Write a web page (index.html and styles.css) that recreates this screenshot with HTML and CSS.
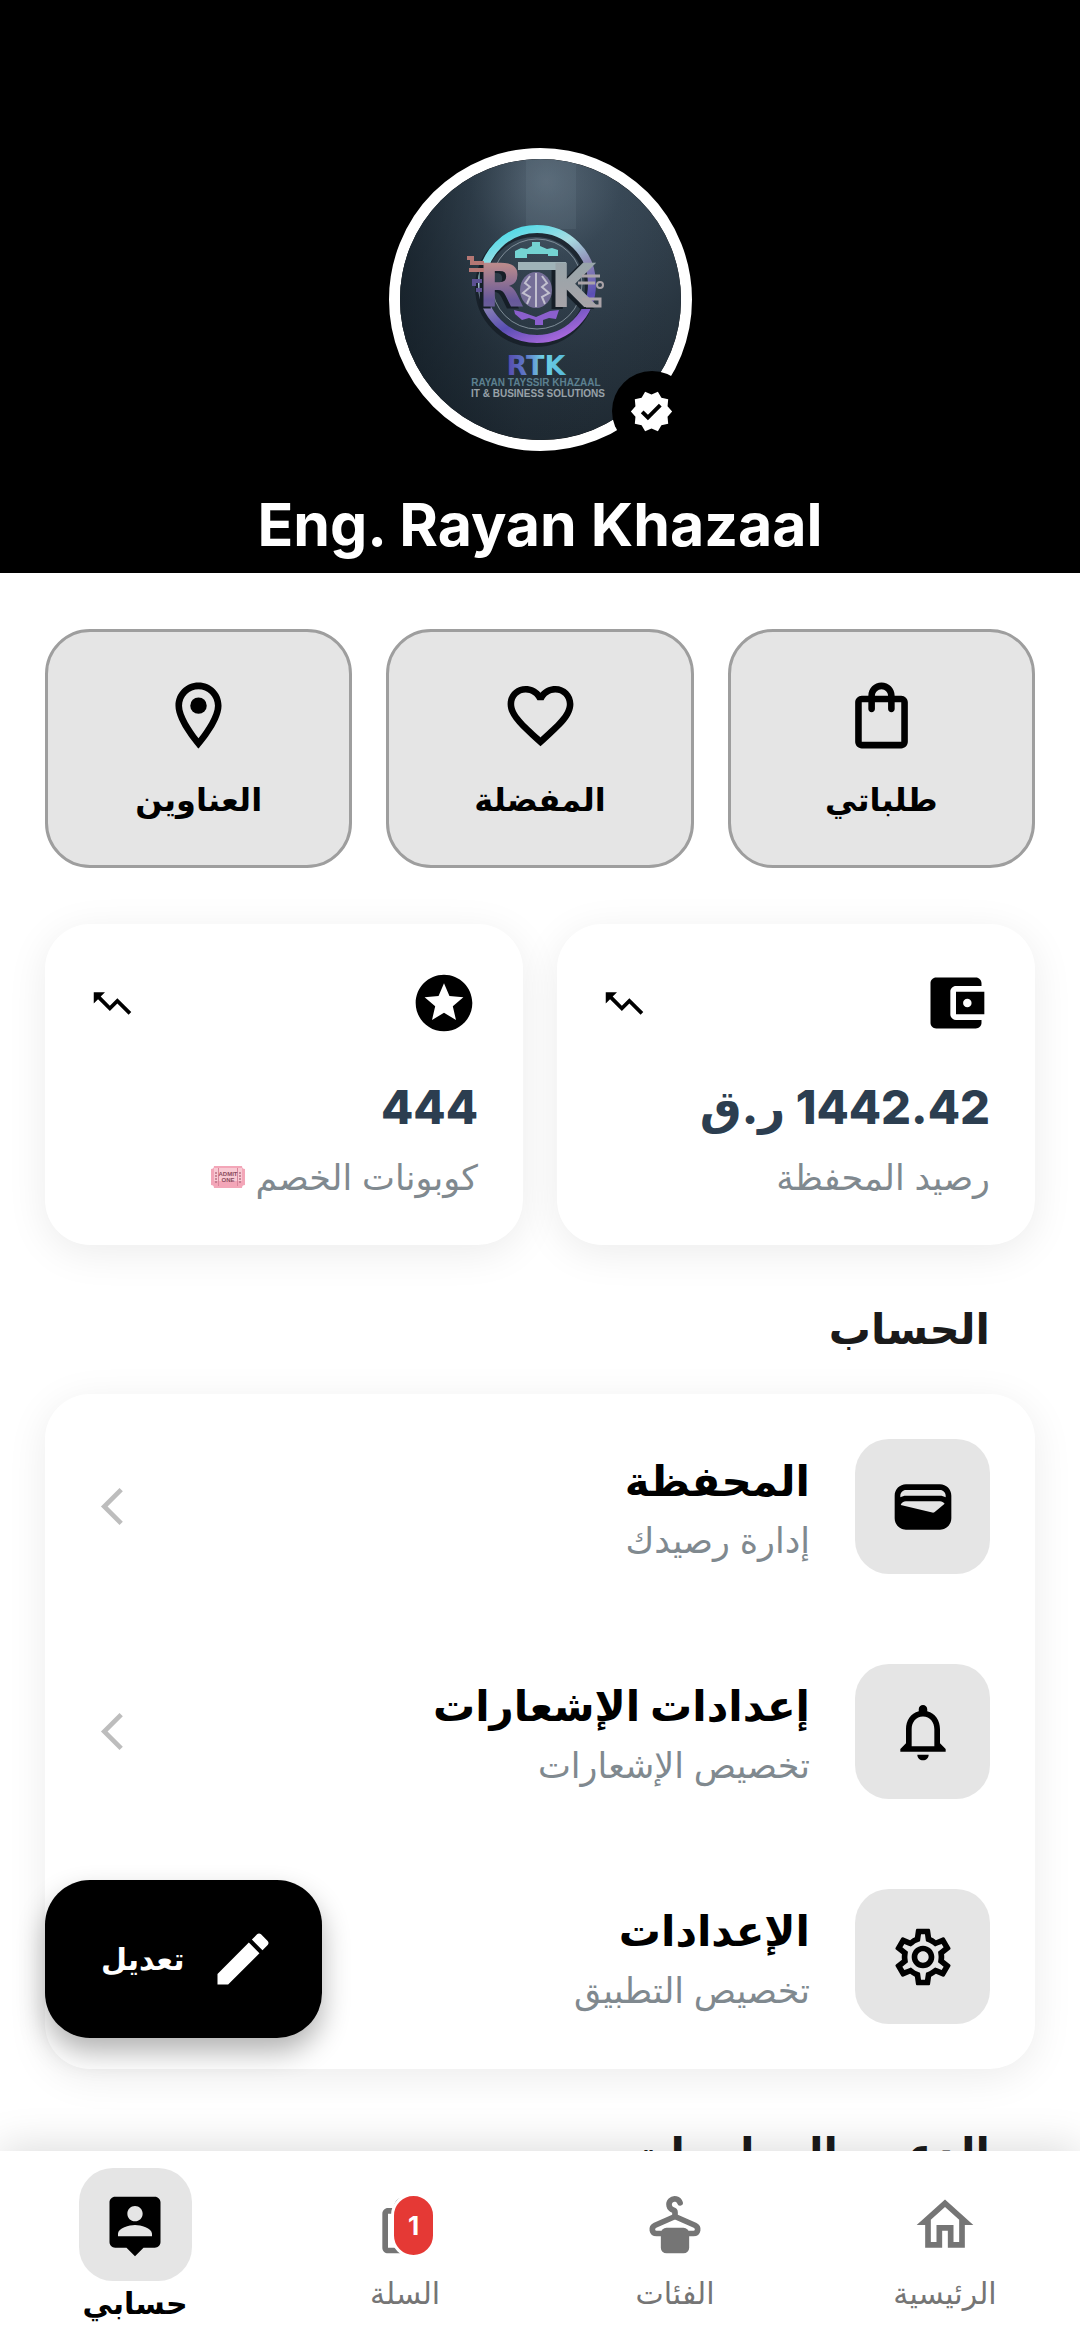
FILE: index.html
```html
<!DOCTYPE html>
<html lang="ar" dir="rtl">

<head>
    <meta charset="UTF-8">
    <meta name="viewport" content="width=device-width, initial-scale=1.0">
    <title>حسابي</title>
    <link rel="stylesheet" href="styles.css">
</head>

<body>

    <main class="content">

        <header class="profile">
            <div class="avatar">
                <svg class="avatar-img" viewBox="0 0 281 281" role="img" aria-label="RTK">
                    <defs>
                        <radialGradient id="wall" cx="0.52" cy="0.08" r="0.9">
                            <stop offset="0" stop-color="#5c6d7c" />
                            <stop offset="0.3" stop-color="#3a4a58" />
                            <stop offset="0.7" stop-color="#293641" />
                            <stop offset="1" stop-color="#202b34" />
                        </radialGradient>
                        <linearGradient id="shade" x1="0" x2="1" y1="0" y2="0">
                            <stop offset="0" stop-color="#0e1820" stop-opacity="0.6" />
                            <stop offset="0.44" stop-color="#0e1820" stop-opacity="0.1" />
                            <stop offset="1" stop-color="#0e1820" stop-opacity="0" />
                        </linearGradient>
                        <linearGradient id="ring" x1="0.3" x2="0.7" y1="0" y2="1">
                            <stop offset="0" stop-color="#55dbe8" />
                            <stop offset="0.25" stop-color="#a9dce2" />
                            <stop offset="0.5" stop-color="#8d86b4" />
                            <stop offset="0.75" stop-color="#5a4fb4" />
                            <stop offset="1" stop-color="#a868dc" />
                        </linearGradient>
                        <linearGradient id="copper" x1="0" x2="0" y1="0" y2="1">
                            <stop offset="0.2" stop-color="#b98a8c" />
                            <stop offset="0.7" stop-color="#66589a" />
                            <stop offset="1" stop-color="#6f6a94" />
                        </linearGradient>
                        <linearGradient id="steel" x1="0" x2="0" y1="0" y2="1">
                            <stop offset="0" stop-color="#94a5aa" />
                            <stop offset="1" stop-color="#aba3a8" />
                        </linearGradient>
                        <linearGradient id="word" x1="0" x2="1" y1="0" y2="0">
                            <stop offset="0" stop-color="#5647ac" />
                            <stop offset="0.35" stop-color="#5f7fcb" />
                            <stop offset="0.6" stop-color="#6fd0e6" />
                            <stop offset="1" stop-color="#55b9d8" />
                        </linearGradient>
                    </defs>
                    <rect width="281" height="281" fill="url(#wall)" />
                    <rect width="281" height="281" fill="url(#shade)" />
                    <path d="M126 0h50v70h-50z" fill="#8194a3" opacity="0.14" />
                    <circle cx="135" cy="128" r="55" fill="none" stroke="#121a22" stroke-width="10" opacity="0.7" />
                    <circle cx="137" cy="125" r="55" fill="none" stroke="url(#ring)" stroke-width="8" />
                    <circle cx="137" cy="125" r="45" fill="none" stroke="#7f8d98" stroke-width="1" />
                    <path d="M115 99v-7l6-3 6 1 3-2 2-1v-4h8v4l7 3 5-1 6 2v6h-10v-2h-21v4z" fill="#74d3d2" />
                    <path d="M114 151l8 2 14 5 14-6 9-1-3 9-7-1-6 2v5h-8v-5l-6-2-7 2-7-6z" fill="#8b5fcd" />
                    <g class="logo-big" fill="#151e27" transform="translate(-4 2)">
                        <text x="78" y="148">R</text>
                        <text x="150" y="148">K</text>
                    </g>
                    <path d="M118 103h48v8h-48z" fill="#9fb3b8" />
                    <g class="logo-big">
                        <text x="78" y="148" fill="url(#copper)">R</text>
                        <text x="150" y="148" fill="url(#steel)">K</text>
                    </g>
                    <ellipse cx="136" cy="131" rx="16" ry="18" fill="#756e98" />
                    <path d="M136 114v34M130 117l-5 7 5 4-7 6 7 4-3 7M142 117l5 7-5 4 7 6-7 4 3 7" fill="none" stroke="#c2c0cf" stroke-width="2" />
                    <path d="M84 104H72v-5h-5M84 111H69" fill="none" stroke="#b57774" stroke-width="4" />
                    <path d="M82 122h-8v5M82 131h-6" fill="none" stroke="#5b5092" stroke-width="4" />
                    <path d="M182 117h18M178 124h17M182 140h18v7h-14" fill="none" stroke="#aaa3a8" stroke-width="3" />
                    <circle cx="200" cy="126" r="3" fill="none" stroke="#aaa3a8" stroke-width="2" />
                    <text class="logo-mid" x="136" y="216" fill="url(#word)">RTK</text>
                    <text class="logo-line" x="136" y="227" fill="#5c8090">RAYAN TAYSSIR KHAZAAL</text>
                    <text class="logo-line" x="138" y="238" fill="#98a1a8">IT &amp; BUSINESS SOLUTIONS</text>
                </svg>
                <span class="verified">
                    <svg viewBox="0 0 24 24">
                        <path d="M23 12l-2.44-2.79.34-3.69-3.61-.82-1.89-3.2L12 2.96 8.6 1.5 6.71 4.69 3.1 5.5l.34 3.7L1 12l2.44 2.79-.34 3.7 3.61.82L8.6 22.5l3.4-1.47 3.4 1.46 1.89-3.19 3.61-.82-.34-3.69L23 12zm-12.91 4.72l-3.8-3.81 1.48-1.48 2.32 2.33 5.85-5.87 1.48 1.48-7.33 7.35z" />
                    </svg>
                </span>
            </div>
            <h1 class="name" dir="ltr">Eng. Rayan Khazaal</h1>
        </header>

        <!-- Quick links -->
        <nav class="quick">
            <a class="quick-card" href="#orders">
                <svg viewBox="0 0 24 24">
                    <path d="M18 6h-2c0-2.21-1.79-4-4-4S8 3.79 8 6H6c-1.1 0-2 .9-2 2v12c0 1.1.9 2 2 2h12c1.1 0 2-.9 2-2V8c0-1.1-.9-2-2-2zm-6-2c1.1 0 2 .9 2 2h-4c0-1.1.9-2 2-2zm6 16H6V8h2v2c0 .55.45 1 1 1s1-.45 1-1V8h4v2c0 .55.45 1 1 1s1-.45 1-1V8h2v12z" />
                </svg>
                <span>طلباتي</span>
            </a>
            <a class="quick-card" href="#favorites">
                <svg viewBox="0 0 24 24">
                    <path d="M16.5 3c-1.74 0-3.41.81-4.5 2.09C10.91 3.81 9.24 3 7.5 3 4.42 3 2 5.42 2 8.5c0 3.78 3.4 6.86 8.55 11.54L12 21.35l1.45-1.32C18.6 15.36 22 12.28 22 8.5 22 5.42 19.58 3 16.5 3zm-4.4 15.55l-.1.1-.1-.1C7.14 14.24 4 11.39 4 8.5 4 6.5 5.5 5 7.5 5c1.54 0 3.04.99 3.57 2.36h1.87C13.46 5.99 14.96 5 16.5 5c2 0 3.5 1.5 3.5 3.5 0 2.89-3.14 5.74-7.9 10.05z" />
                </svg>
                <span>المفضلة</span>
            </a>
            <a class="quick-card" href="#addresses">
                <svg viewBox="0 0 24 24">
                    <path d="M12 2C8.13 2 5 5.13 5 9c0 5.25 7 13 7 13s7-7.75 7-13c0-3.87-3.13-7-7-7zM7 9c0-2.76 2.24-5 5-5s5 2.24 5 5c0 2.88-2.88 7.19-5 9.88C9.92 16.21 7 11.85 7 9z" />
                    <circle cx="12" cy="9" r="2.5" />
                </svg>
                <span>العناوين</span>
            </a>
        </nav>

        <!-- Balance and coupons -->
        <section class="stats">
            <div class="stat-card">
                <div class="stat-icons">
                    <svg class="icon" viewBox="0 0 24 24">
                        <path d="M21 18v1c0 1.1-.9 2-2 2H5c-1.11 0-2-.9-2-2V5c0-1.1.89-2 2-2h14c1.1 0 2 .9 2 2v1h-9c-1.11 0-2 .9-2 2v8c0 1.1.89 2 2 2h9zm-9-2h10V8H12v8zm4-2.5c-.83 0-1.5-.67-1.5-1.5s.67-1.5 1.5-1.5 1.5.67 1.5 1.5-.67 1.5-1.5 1.5z" />
                    </svg>
                    <svg class="icon-small flip" viewBox="0 0 24 24">
                        <path d="M16 6l2.29 2.29-4.88 4.88-4-4L2 16.59 3.41 18l6-6 4 4 6.3-6.29L22 12V6z" />
                    </svg>
                </div>
                <div class="stat-value"><bdi>1442.42</bdi> ر.ق</div>
                <div class="stat-label">رصيد المحفظة</div>
            </div>
            <div class="stat-card">
                <div class="stat-icons">
                    <svg class="icon" viewBox="0 0 24 24">
                        <path d="M11.99 2C6.47 2 2 6.48 2 12s4.47 10 9.99 10C17.52 22 22 17.52 22 12S17.52 2 11.99 2zm4.24 16L12 15.45 7.77 18l1.12-4.81-3.73-3.23 4.92-.42L12 5l1.92 4.53 4.92.42-3.73 3.23L16.23 18z" />
                    </svg>
                    <svg class="icon-small flip" viewBox="0 0 24 24">
                        <path d="M16 6l2.29 2.29-4.88 4.88-4-4L2 16.59 3.41 18l6-6 4 4 6.3-6.29L22 12V6z" />
                    </svg>
                </div>
                <div class="stat-value">444</div>
                <div class="stat-label">
                    كوبونات الخصم
                    <svg class="ticket" viewBox="0 0 34 22">
                        <path d="M3 0h28a3 3 0 0 0 3 3v16a3 3 0 0 0-3 3H3a3 3 0 0 0-3-3V3a3 3 0 0 0 3-3z" fill="#f3a6b8" />
                        <path d="M3 2h28v13H3z" fill="#f8c9d3" />
                        <path d="M7.5 2v18M26.5 2v18" stroke="#d9879b" stroke-width="1" />
                        <path d="M5 6v11M29 6v11" stroke="#b97386" stroke-width="1.5" stroke-dasharray="2 1" />
                        <text x="17" y="10">ADMIT</text>
                        <text x="17" y="16">ONE</text>
                    </svg>
                </div>
            </div>
        </section>

        <h2 class="section-title">الحساب</h2>
        <section class="panel">
            <a class="row" href="#wallet">
                <span class="tile">
                    <svg class="icon" viewBox="0 0 24 24">
                        <path d="M18 4H6C3.79 4 2 5.79 2 8v8c0 2.21 1.79 4 4 4h12c2.21 0 4-1.79 4-4V8c0-2.21-1.79-4-4-4zm-1.86 9.77c-.24.2-.57.28-.88.2L4.15 11.25C4.45 10.52 5.16 10 6 10h12c.67 0 1.26.34 1.63.84l-3.49 2.93zM6 6h12c1.1 0 2 .9 2 2v.55c-.59-.34-1.27-.55-2-.55H6c-.73 0-1.41.21-2 .55V8c0-1.1.9-2 2-2z" />
                    </svg>
                </span>
                <span class="row-text">
                    <strong>المحفظة</strong>
                    <small>إدارة رصيدك</small>
                </span>
                <svg class="icon-small chevron flip" viewBox="0 0 24 24">
                    <path d="M6.49 20.13l1.77 1.77 9.9-9.9-9.9-9.9-1.77 1.77L14.62 12z" />
                </svg>
            </a>
            <a class="row" href="#notifications">
                <span class="tile">
                    <svg class="icon" viewBox="0 0 24 24">
                        <path d="M12 22c1.1 0 2-.9 2-2h-4c0 1.1.9 2 2 2zm6-6v-5c0-3.07-1.63-5.64-4.5-6.32V4c0-.83-.67-1.5-1.5-1.5s-1.5.67-1.5 1.5v.68C7.64 5.36 6 7.92 6 11v5l-2 2v1h16v-1l-2-2zm-2 1H8v-6c0-2.48 1.51-4.5 4-4.5s4 2.02 4 4.5v6z" />
                    </svg>
                </span>
                <span class="row-text">
                    <strong>إعدادات الإشعارات</strong>
                    <small>تخصيص الإشعارات</small>
                </span>
                <svg class="icon-small chevron flip" viewBox="0 0 24 24">
                    <path d="M6.49 20.13l1.77 1.77 9.9-9.9-9.9-9.9-1.77 1.77L14.62 12z" />
                </svg>
            </a>
            <a class="row" href="#settings">
                <span class="tile">
                    <svg class="icon" viewBox="0 0 24 24">
                        <path d="M19.43 12.98c.04-.32.07-.64.07-.98s-.03-.66-.07-.98l2.11-1.65c.19-.15.24-.42.12-.64l-2-3.46c-.09-.16-.26-.25-.44-.25-.06 0-.12.01-.17.03l-2.49 1c-.52-.4-1.08-.73-1.69-.98l-.38-2.65C14.46 2.18 14.25 2 14 2h-4c-.25 0-.46.18-.49.42l-.38 2.65c-.61.25-1.17.59-1.69.98l-2.49-1c-.06-.02-.12-.03-.18-.03-.17 0-.34.09-.43.25l-2 3.46c-.13.22-.07.49.12.64l2.11 1.65c-.04.32-.07.65-.07.98s.03.66.07.98l-2.11 1.65c-.19.15-.24.42-.12.64l2 3.46c.09.16.26.25.44.25.06 0 .12-.01.17-.03l2.49-1c.52.4 1.08.73 1.69.98l.38 2.65c.03.24.24.42.49.42h4c.25 0 .46-.18.49-.42l.38-2.65c.61-.25 1.17-.59 1.69-.98l2.49 1c.06.02.12.03.18.03.17 0 .34-.09.43-.25l2-3.46c.12-.22.07-.49-.12-.64l-2.11-1.65zm-1.98-1.71c.04.31.05.52.05.73s-.02.43-.05.73l-.14 1.13.89.7 1.08.84-.7 1.21-1.27-.51-1.04-.42-.9.68c-.43.32-.84.56-1.25.73l-1.06.43-.16 1.13-.2 1.35h-1.4l-.19-1.35-.16-1.13-1.06-.43c-.43-.18-.83-.41-1.23-.71l-.91-.7-1.06.43-1.27.51-.7-1.21 1.08-.84.89-.7-.14-1.13c-.03-.31-.05-.54-.05-.74s.02-.43.05-.73l.14-1.13-.89-.7-1.08-.84.7-1.21 1.27.51 1.04.42.9-.68c.43-.32.84-.56 1.25-.73l1.06-.43.16-1.13.2-1.35h1.39l.19 1.35.16 1.13 1.06.43c.43.18.83.41 1.23.71l.91.7 1.06-.43 1.27-.51.7 1.21-1.07.85-.89.7.14 1.13zM12 8c-2.21 0-4 1.79-4 4s1.79 4 4 4 4-1.79 4-4-1.79-4-4-4zm0 6c-1.1 0-2-.9-2-2s.9-2 2-2 2 .9 2 2-.9 2-2 2z" />
                    </svg>
                </span>
                <span class="row-text">
                    <strong>الإعدادات</strong>
                    <small>تخصيص التطبيق</small>
                </span>
                <svg class="icon-small chevron flip" viewBox="0 0 24 24">
                    <path d="M6.49 20.13l1.77 1.77 9.9-9.9-9.9-9.9-1.77 1.77L14.62 12z" />
                </svg>
            </a>
        </section>

        <h2 class="section-title">الدعم والمعلومات</h2>
    </main>

    <button class="fab" type="button">
        <svg class="icon" viewBox="0 0 24 24">
            <path d="M3 17.25V21h3.75L17.81 9.94l-3.75-3.75L3 17.25zM20.71 7.04c.39-.39.39-1.02 0-1.41l-2.34-2.34c-.39-.39-1.02-.39-1.41 0l-1.83 1.83 3.75 3.75 1.83-1.83z" />
        </svg>
        <span>تعديل</span>
    </button>

    <nav class="tabbar">
        <a class="tab" href="#home">
            <svg class="icon" viewBox="0 0 24 24">
                <path d="M12 5.69l5 4.5V18h-2v-6H9v6H7v-7.81l5-4.5M12 3L2 12h3v8h6v-6h2v6h6v-8h3L12 3z" />
            </svg>
            <span>الرئيسية</span>
        </a>
        <a class="tab" href="#categories">
            <svg class="icon" viewBox="0 0 24 24">
                <path d="M13.8 4.2A2 2 0 1 0 11.3 6.7Q12 6.9 12 7.5V9M12 9L5 12.1C3.4 12.9 3.8 15 5.5 15h13c1.7 0 2.1-2.1.5-2.9L12 9z" fill="none" stroke="currentColor" stroke-width="2" stroke-linecap="round" />
                <rect x="7" y="13" width="10" height="9" rx="2" />
            </svg>
            <span>الفئات</span>
        </a>
        <a class="tab" href="#cart">
            <span class="cart">
                <svg class="icon" viewBox="0 0 24 24">
                    <path d="M18 6h-2c0-2.21-1.79-4-4-4S8 3.79 8 6H6c-1.1 0-2 .9-2 2v12c0 1.1.9 2 2 2h12c1.1 0 2-.9 2-2V8c0-1.1-.9-2-2-2zm-6-2c1.1 0 2 .9 2 2h-4c0-1.1.9-2 2-2zm6 16H6V8h12v12z" />
                </svg>
                <span class="badge">1</span>
            </span>
            <span>السلة</span>
        </a>
        <a class="tab active" href="#account">
            <span class="tab-tile">
                <svg class="icon" viewBox="0 0 24 24">
                    <path d="M19 2H5c-1.11 0-2 .9-2 2v14c0 1.1.89 2 2 2h4l3 3 3-3h4c1.1 0 2-.9 2-2V4c0-1.1-.9-2-2-2zm-7 3.3c1.49 0 2.7 1.21 2.7 2.7 0 1.49-1.21 2.7-2.7 2.7-1.49 0-2.7-1.21-2.7-2.7 0-1.49 1.21-2.7 2.7-2.7zM18 16H6v-.9c0-2 4-3.1 6-3.1s6 1.1 6 3.1v.9z" />
                </svg>
            </span>
            <span>حسابي</span>
        </a>
    </nav>

</body>

</html>
```
FILE: styles.css
```css
* {
    box-sizing: border-box;
}

body {
    margin: 0;
    height: 100vh;
    display: flex;
    flex-direction: column;
    position: relative;
    overflow: hidden;
    background-color: #fff;
    color: #000;
    font-family: Inter, "DejaVu Sans", sans-serif;
}

a {
    color: inherit;
    text-decoration: none;
}

svg {
    display: block;
    fill: currentColor;
}

.icon {
    width: 68px;
    height: 68px;
    flex: none;
}

.icon-small {
    width: 45px;
    height: 45px;
    flex: none;
}

.flip {
    transform: scaleX(-1);
}

.content {
    flex: 1;
    min-height: 0;
    overflow-y: auto;
    scrollbar-width: none;
}

/* Header */

.profile {
    display: flex;
    flex-direction: column;
    align-items: center;
    padding: 148px 45px 12px;
    background-color: #000;
    color: #fff;
}

.avatar {
    position: relative;
    width: 303px;
    height: 303px;
    border: 11px solid #fff;
    border-radius: 50%;
}

.avatar-img {
    width: 100%;
    height: 100%;
    border-radius: 50%;
    direction: ltr;
}

.logo-big {
    font: bold 60px "DejaVu Sans", sans-serif;
}

.logo-mid {
    font: bold 27px "DejaVu Sans", sans-serif;
    text-anchor: middle;
}

.logo-line {
    font: bold 10px "Liberation Sans", sans-serif;
    text-anchor: middle;
}

.verified {
    position: absolute;
    right: -11px;
    bottom: -11px;
    width: 80px;
    height: 80px;
    display: flex;
    align-items: center;
    justify-content: center;
    border-radius: 50%;
    background-color: #000;
}

.verified svg {
    width: 45px;
    height: 45px;
}

.name {
    margin: 38px 0 0;
    font-size: 59px;
    line-height: 72px;
    font-weight: 700;
}

/* Quick links */

.quick {
    display: grid;
    grid-template-columns: repeat(3, 1fr);
    gap: 34px;
    padding: 56px 45px;
}

.quick-card {
    display: flex;
    flex-direction: column;
    align-items: center;
    gap: 22px;
    padding: 44px 20px 42px;
    border: 3px solid #9e9e9e;
    border-radius: 45px;
    background-color: #e5e5e5;
    font-size: 32px;
    line-height: 46px;
    font-weight: 700;
}

.quick-card svg {
    width: 79px;
    height: 79px;
}

/* Stats */

.stats {
    display: grid;
    grid-template-columns: repeat(2, 1fr);
    gap: 34px;
    padding: 0 45px;
}

.stat-card {
    padding: 45px;
    border-radius: 45px;
    background-color: #fff;
    box-shadow: 0 8px 40px rgba(0, 0, 0, 0.08);
}

.stat-icons {
    display: flex;
    align-items: center;
    justify-content: space-between;
}

.stat-value {
    margin-top: 34px;
    font-size: 47px;
    line-height: 72px;
    font-weight: 800;
    color: #2c3e50;
}

.stat-label {
    display: flex;
    align-items: center;
    gap: 11px;
    margin-top: 11px;
    font-size: 35px;
    line-height: 46px;
    color: #80898f;
}

.ticket {
    width: 34px;
    height: 22px;
}

.ticket text {
    font: bold 6px "Liberation Sans", sans-serif;
    text-anchor: middle;
    fill: #8a4a5c;
}

/* Account list */

.section-title {
    margin: 49px 90px 30px;
    font-size: 42px;
    line-height: 70px;
    font-weight: 700;
    color: #1a1a1a;
}

.panel {
    margin: 0 45px;
    border-radius: 45px;
    background-color: #fff;
    box-shadow: 0 8px 40px rgba(0, 0, 0, 0.08);
}

.row {
    display: flex;
    align-items: center;
    gap: 45px;
    padding: 45px;
}

.tile {
    width: 135px;
    height: 135px;
    display: flex;
    align-items: center;
    justify-content: center;
    border-radius: 34px;
    background-color: #e5e5e5;
}

.row-text {
    flex: 1;
    display: flex;
    flex-direction: column;
    gap: 6px;
}

.row-text strong {
    font-size: 42px;
    line-height: 60px;
    font-weight: 700;
}

.row-text small {
    font-size: 35px;
    line-height: 46px;
    color: #80898f;
}

.chevron {
    color: #bdbdbd;
}

/* Edit button */

.fab {
    position: absolute;
    left: 45px;
    bottom: 302px;
    height: 158px;
    display: flex;
    align-items: center;
    gap: 24px;
    padding: 0 45px 0 56px;
    border: 0;
    border-radius: 45px;
    background-color: #000;
    color: #fff;
    font: 700 30px Inter, "DejaVu Sans", sans-serif;
    box-shadow: 0 14px 28px rgba(0, 0, 0, 0.3);
}

/* Bottom tabs */

.tabbar {
    position: relative;
    display: grid;
    grid-template-columns: repeat(4, 1fr);
    height: 189px;
    background-color: #fff;
    box-shadow: 0 -4px 40px rgba(0, 0, 0, 0.14);
}

.tab {
    display: flex;
    flex-direction: column;
    align-items: center;
    gap: 12px;
    padding-top: 40px;
    font-size: 30px;
    line-height: 44px;
    color: #757575;
}

.tab.active {
    gap: 0;
    padding-top: 17px;
    font-weight: 700;
    color: #000;
}

.tab-tile {
    width: 113px;
    height: 113px;
    display: flex;
    align-items: center;
    justify-content: center;
    border-radius: 34px;
    background-color: #e5e5e5;
}

.cart {
    position: relative;
}

.badge {
    position: absolute;
    top: 2px;
    right: 3px;
    width: 45px;
    height: 65px;
    border: 3px solid #fff;
    border-radius: 23px;
    background-color: #e53935;
    color: #fff;
    font-size: 26px;
    line-height: 59px;
    font-weight: 700;
    text-align: center;
}
```
